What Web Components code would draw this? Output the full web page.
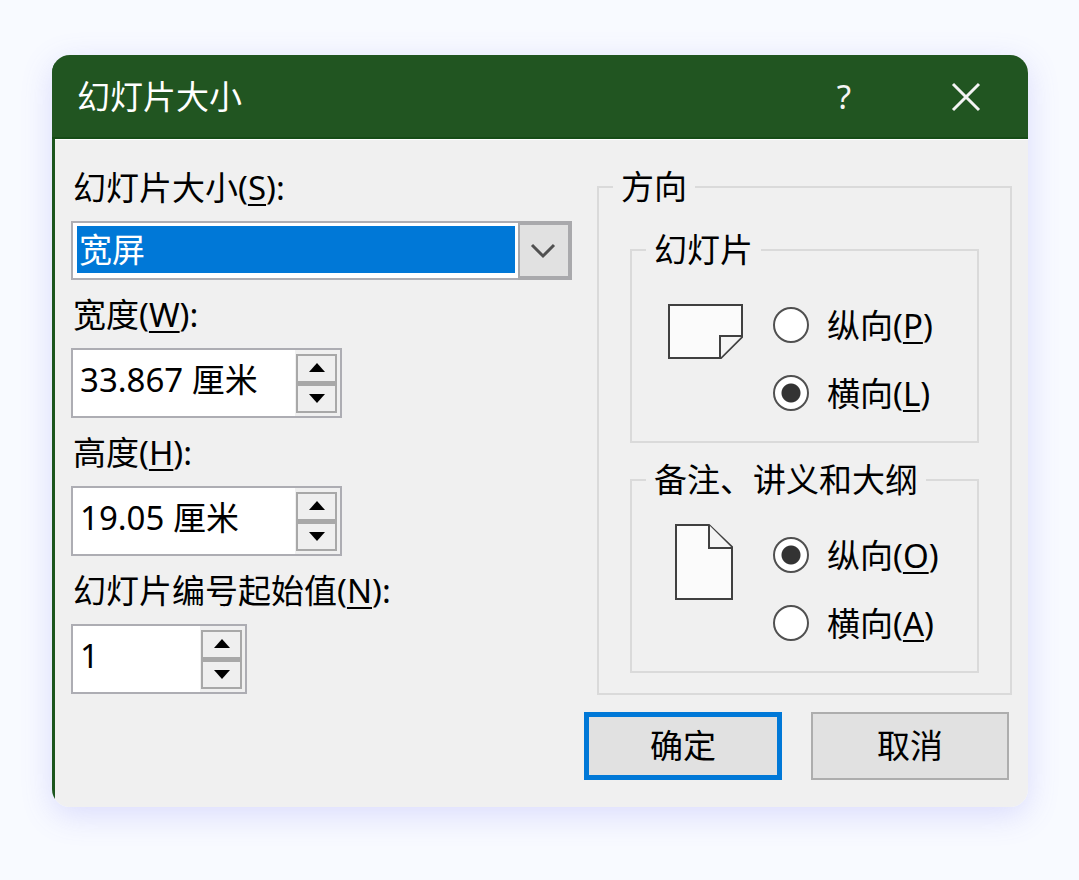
<!DOCTYPE html>
<html lang="zh-CN">
<head>
<meta charset="utf-8">
<meta name="viewport" content="width=device-width, initial-scale=1">
<title>幻灯片大小</title>
<style>
  html { background: #f8faff; }
  body {
    margin: 0;
    padding: 55px 51px 55px 52px;
    font: 33px/40px "Noto Sans", "Noto Sans CJK SC", sans-serif;
    color: #000;
  }
</style>
</head>
<body>
<slide-dialog heading="幻灯片大小">
  <combo-field label="幻灯片大小" key="S" options="宽屏,全屏显示(4:3),A4 纸张,自定义"></combo-field>
  <spin-field label="宽度" key="W" value="33.867" unit="厘米"></spin-field>
  <spin-field label="高度" key="H" value="19.05" unit="厘米"></spin-field>
  <spin-field class="short" label="幻灯片编号起始值" key="N" value="1"></spin-field>
  <group-box slot="side" legend="方向">
    <orientation-group legend="幻灯片" keys="P,L" value="landscape"></orientation-group>
    <orientation-group legend="备注、讲义和大纲" keys="O,A" value="portrait"></orientation-group>
  </group-box>
  <dialog-button slot="actions" primary>确定</dialog-button>
  <dialog-button slot="actions">取消</dialog-button>
</slide-dialog>

<script>
const underline = 'u { text-decoration: underline 2px; text-underline-offset: 4px; text-decoration-skip-ink: none; }';
const groupStyle = `
  :host { display: block; }
  fieldset { margin: 0; padding: 0; border: 2px solid #dadada; min-width: 0; }
  legend { margin-left: 14px; padding: 0 8px; line-height: 34px; }`;

class BaseElement extends HTMLElement {
  connectedCallback() {
    if (this.shadowRoot) return;
    this.attachShadow({ mode: 'open' }).innerHTML = this.render();
    this.ready();
  }
  attr(name) { return this.getAttribute(name) || ''; }
  ready() {}
}

customElements.define('slide-dialog', class extends BaseElement {
  render() {
    return `<style>
      :host { display: block; border-radius: 18px; box-shadow: 0 8px 32px rgba(99, 102, 241, .2); }
      section { border-radius: 18px; overflow: hidden; background: linear-gradient(90deg, #1c561e 3px, #f0f0f0 3px); }
      header { display: flex; align-items: center; height: 84px; padding: 2px 26px 0 25px;
        box-sizing: border-box; background: #215521; color: #fff; border-bottom: 2px solid #164c17; }
      h1 { flex: 1; margin: 0; font: inherit; }
      header button { appearance: none; border: 0; padding: 0; background: none; color: #f4f4f4; width: 72px; height: 40px;
        font: 33px/40px "Noto Sans", sans-serif; display: grid; place-items: center; }
      header button + button { margin-left: 50px; }
      main { display: grid; grid-template-columns: minmax(0, 1fr) 415px; gap: 25px; margin-left: 3px; padding: 13px 16px 0; border-top: 1px solid #fff; }
      .side { padding-top: 17px; }
      footer { display: flex; justify-content: flex-end; gap: 29px; padding: 17px 19px 27px; }
    </style>
    <section role="dialog" aria-labelledby="t">
      <header><h1 id="t">${this.attr('heading')}</h1>
        <button type="button" aria-label="帮助">?</button>
        <button type="button" aria-label="关闭"><svg width="30" height="30" viewBox="0 0 30 30"><path d="M2 2 28 28M28 2 2 28" stroke="#f4f4f4" stroke-width="3"/></svg></button>
      </header>
      <main><div><slot></slot></div><div class="side"><slot name="side"></slot></div></main>
      <footer><slot name="actions"></slot></footer>
    </section>`;
  }
});

customElements.define('combo-field', class extends BaseElement {
  render() {
    return `<style>
      :host { display: block; }
      label { display: block; padding: 15px 2px 13px; }
      .box { display: grid; height: 59px; }
      select { grid-area: 1 / 1; appearance: none; width: 100%; height: 59px; margin: 0; box-sizing: border-box; outline: 0;
        border: 2px solid #adadb3; border-radius: 0; padding: 3px 55px 5px 4px; color: #fff; font: inherit; text-indent: 2px;
        background: linear-gradient(#0078d7, #0078d7) content-box, #fff; }
      option { color: #000; background: #fff; }
      .arrow { grid-area: 1 / 1; justify-self: end; width: 54px; box-sizing: border-box; pointer-events: none; display: grid;
        place-items: center start; padding-left: 9px; border: 4px solid #a9a9ac; border-left-width: 2px; background: #e1e1e1; }
      ${underline}
    </style>
    <label for="s">${this.attr('label')}(<u>${this.attr('key')}</u>):</label>
    <div class="box"><select id="s">${this.attr('options').split(',').map(o => `<option>${o}</option>`).join('')}</select>
      <span class="arrow"><svg width="28" height="16" viewBox="0 0 28 16"><path d="M3 2 14 13 25 2" fill="none" stroke="#505050" stroke-width="3"/></svg></span></div>`;
  }
});

customElements.define('spin-field', class extends BaseElement {
  render() {
    const unit = this.attr('unit') ? ' ' + this.attr('unit') : '';
    return `<style>
      :host { display: block; --box: 271px; }
      :host(.short) { --box: 176px; }
      label { display: block; padding: 15px 2px 13px; }
      .box { display: flex; width: var(--box); height: 70px; box-sizing: border-box; border: 2px solid #adadb3; background: #fff; }
      input { flex: 1; min-width: 0; width: 0; border: 0; outline: 0; margin: 0; padding: 0 0 6px 7px; background: none; color: #000; font: inherit; }
      .steps { display: grid; grid-template-rows: 1fr 1fr; width: 41px; padding: 4px 3px 3px 1px; background: #f0f0f0; }
      button { appearance: none; margin: 0; padding: 0; border: 2px solid #a8a8a8; background: #efefef; display: grid; place-items: center; }
      button:first-child { border-bottom-width: 3px; }
      ${underline}
    </style>
    <label for="n">${this.attr('label')}(<u>${this.attr('key')}</u>):</label>
    <div class="box"><input id="n" type="text" value="${this.attr('value')}${unit}">
      <div class="steps">
        <button type="button" aria-label="增加"><svg width="16" height="10" viewBox="0 0 16 10"><path d="M8 0 16 9H0Z"/></svg></button>
        <button type="button" aria-label="减少"><svg width="16" height="10" viewBox="0 0 16 10"><path d="M8 10 16 1H0Z"/></svg></button>
      </div></div>`;
  }
  ready() {
    const input = this.shadowRoot.querySelector('input');
    const unit = this.attr('unit') ? ' ' + this.attr('unit') : '';
    this.shadowRoot.querySelectorAll('button').forEach((b, i) => b.addEventListener('click', () => {
      input.value = +((parseFloat(input.value) || 0) + (i ? -1 : 1)).toFixed(3) + unit;
    }));
  }
});

customElements.define('group-box', class extends BaseElement {
  render() {
    return `<style>${groupStyle}
      .content { display: grid; gap: 20px; padding: 29px 31px 20px; }
    </style>
    <fieldset><legend>${this.attr('legend')}</legend><div class="content"><slot></slot></div></fieldset>`;
  }
});

customElements.define('orientation-group', class extends BaseElement {
  render() {
    const keys = this.attr('keys').split(',');
    const value = this.attr('value');
    const page = value === 'landscape'
      ? '<path d="M2 14H75V46L54 67H2Z" fill="#fbfbfb"/><path d="M75 45H53V67" fill="#f4f4f4"/>'
      : '<path d="M9 4H42L65 26V78H9Z" fill="#fbfbfb"/><path d="M42 4V27H65" fill="#f4f4f4"/>';
    const row = (id, text, key) => `<label><input type="radio" name="o" value="${id}"${value === id ? ' checked' : ''}><span>${text}(<u>${key}</u>)</span></label>`;
    return `<style>${groupStyle}
      .content { display: flex; gap: 28px; padding: 24px 0 14px 35px; }
      svg { flex: none; }
      label { display: flex; align-items: center; gap: 18px; height: 68px; white-space: nowrap; }
      label span { padding-top: 2px; }
      input { appearance: none; flex: none; width: 36px; height: 36px; margin: 0; border: 2px solid #505050; border-radius: 50%; background: #fff; }
      input:checked { background: radial-gradient(circle, #333 9px, #fff 10px); }
      ${underline}
    </style>
    <fieldset><legend>${this.attr('legend')}</legend><div class="content">
      <svg width="78" height="82" viewBox="0 0 78 82" stroke="#404040" stroke-width="2">${page}</svg>
      <div>${row('portrait', '纵向', keys[0])}${row('landscape', '横向', keys[1])}</div>
    </div></fieldset>`;
  }
});

customElements.define('dialog-button', class extends BaseElement {
  render() {
    return `<style>
      :host { display: block; }
      button { display: block; width: 198px; height: 68px; margin: 0; padding: 0; border: 2px solid #adadad; border-radius: 0; background: #e1e1e1; color: #000; font: inherit; }
      :host([primary]) button { border: 5px solid #0078d7; }
    </style><button type="button"><slot></slot></button>`;
  }
});
</script>
</body>
</html>
